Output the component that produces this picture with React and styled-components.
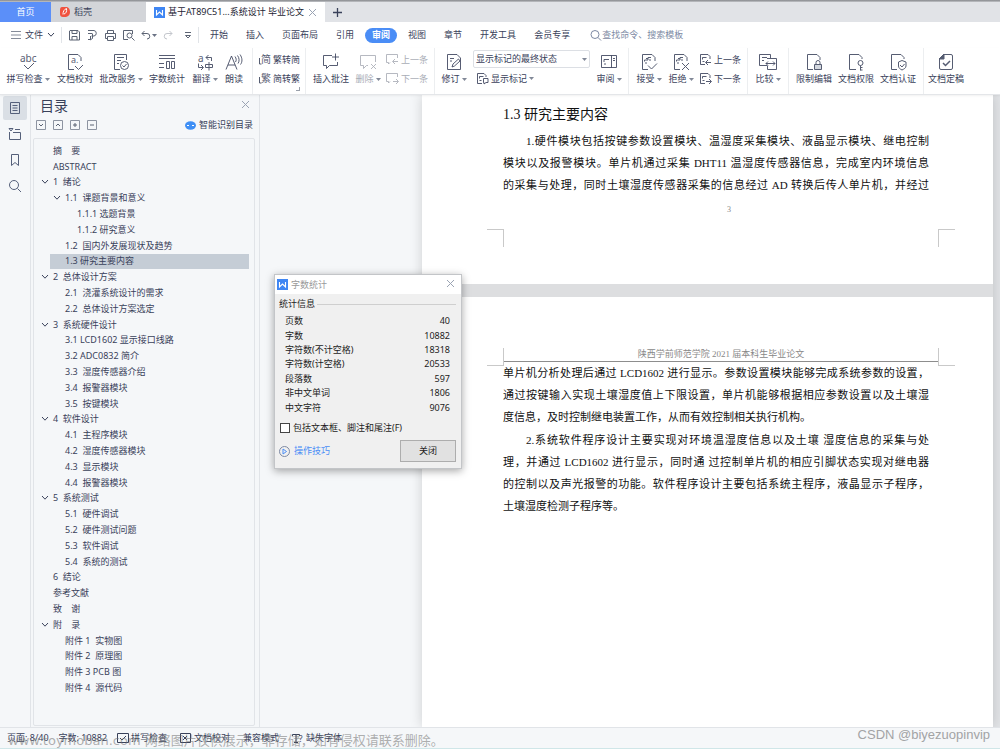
import React, { useState } from "react";
import styled, { createGlobalStyle, ThemeProvider } from "styled-components";

const theme = {
    ui: '"Noto Sans", "Noto Sans CJK SC", sans-serif',
    doc: '"Liberation Serif", "Noto Sans CJK SC", serif',
    ink: '#39415a',
    muted: '#a9adb6',
    accent: '#4a8df6',
    line: '#e1e4e8',
    pane: '#f5f7f9',
};

const GlobalStyle = createGlobalStyle`
    * {
        box-sizing: border-box;
    }
    body {
        margin: 0;
        background: #fff;
    }
    button, input, select {
        margin: 0;
        padding: 0;
        border: 0;
        background: none;
        color: inherit;
        font: inherit;
    }
    svg {
        flex: none;
        overflow: visible;
    }
`

const Window = styled.div`
    position: relative;
    display: flex;
    flex-direction: column;
    min-height: 100vh;
    overflow: hidden;
    color: ${props => props.theme.ink};
    font: 9px/14px ${props => props.theme.ui};
    white-space: nowrap;
`

const TopEdge = styled.div`
    height: 2px;
    background: linear-gradient(#85878b, #c3c5c9);
`

const TabBar = styled.div`
    display: flex;
    height: 20px;
    background: #e1e3e7;
`

const Tab = styled.button`
    display: flex;
    align-items: center;
    gap: 3px;
    width: ${props => props.$width};
    padding: 0 8px;
    background: ${props => props.$bg};
    color: ${props => props.$color};
    justify-content: ${props => props.$center ? 'center' : 'flex-start'};
`

const TabTitle = styled.span`
    flex: 1;
    text-align: left;
`

const MenuBar = styled.div`
    display: flex;
    align-items: center;
    height: 26px;
    padding-left: 10px;
`

const MenuDivider = styled.span`
    width: 1px;
    height: 16px;
    background: ${props => props.theme.line};
`

const FileButton = styled.button`
    display: flex;
    align-items: center;
    gap: 4px;
    width: 51px;
`

const QuickTools = styled.div`
    display: flex;
    align-items: center;
    gap: 5px;
    width: 136px;
    padding-left: 6px;
`

const ToolButton = styled.button`
    display: flex;
    align-items: center;
    color: ${props => props.$off ? '#c3c6cc' : '#5b6373'};
`

const MenuItems = styled.nav`
    display: flex;
    padding-left: 2px;
`

const MenuItem = styled.button`
    padding: 0 ${props => props.$active ? '7px' : '9px'};
    margin: 0 ${props => props.$active ? '2px' : '0'};
    height: 15px;
    border-radius: 8px;
    background: ${props => props.$active ? props.theme.accent : 'none'};
    color: ${props => props.$active ? '#fff' : 'inherit'};
    font-weight: ${props => props.$active ? 700 : 400};
`

const Search = styled.label`
    display: flex;
    align-items: center;
    margin-left: 11px;
    color: #7d89a3;
    input {
        width: 100px;
        outline: none;
    }
    input::placeholder {
        color: #7d89a3;
        opacity: 1;
    }
`

const Ribbon = styled.div`
    display: flex;
    height: 47px;
    border-bottom: 1px solid #e4e6e9;
    position: relative;
    z-index: 1;
    background: #fff;
    box-shadow: 0 1px 2px rgba(0, 0, 0, 0.06);
    svg {
        opacity: 0.85;
    }
`

const Group = styled.div`
    position: relative;
    display: flex;
    padding: 0 4px;
    border-right: 1px solid ${props => props.$last ? 'transparent' : '#eceef0'};
`

const BigButton = styled.button`
    display: flex;
    flex-direction: column;
    align-items: center;
    justify-content: flex-start;
    gap: 1px;
    width: ${props => props.$width};
    padding-top: 5px;
    color: ${props => props.$off ? props.theme.muted : 'inherit'};
`

const Label = styled.span`
    display: flex;
    align-items: center;
    gap: 2px;
`

const Stack = styled.div`
    display: flex;
    flex-direction: column;
    padding: 2px ${props => props.$pad || '4px'} 0;
`

const SmallButton = styled.button`
    display: flex;
    align-items: center;
    gap: 2px;
    height: 19px;
    padding-left: ${props => props.$inset ? '3px' : '0'};
    color: ${props => props.$off ? props.theme.muted : 'inherit'};
`

const Corner = styled.span`
    position: absolute;
    right: 5px;
    bottom: 3px;
    width: 4px;
    height: 4px;
    border-right: 1px solid #9aa0ab;
    border-bottom: 1px solid #9aa0ab;
`

const SelectBox = styled.div`
    position: relative;
    display: flex;
    height: 18px;
    width: 117px;
    margin-bottom: 1px;
    select {
        flex: 1;
        appearance: none;
        padding-left: 2px;
        border: 1px solid #dcdfe4;
        border-radius: 2px;
    }
    svg {
        position: absolute;
        right: 3px;
        top: 8px;
        pointer-events: none;
    }
`

const Main = styled.main`
    display: flex;
    flex: 1;
    background: ${props => props.theme.pane};
`

const SideRail = styled.div`
    display: flex;
    flex-direction: column;
    align-items: center;
    gap: 2px;
    width: 31px;
    padding-top: 1px;
    border-right: 1px solid ${props => props.theme.line};
`

const RailButton = styled.button`
    display: flex;
    align-items: center;
    justify-content: center;
    width: 24px;
    height: 24px;
    border-radius: 2px;
    background: ${props => props.$active ? '#dadfe5' : 'none'};
    color: #55607a;
`

const Outline = styled.aside`
    display: flex;
    flex-direction: column;
    width: 229px;
    padding: 0 4px 1px 2px;
    border-right: 1px solid ${props => props.theme.line};
`

const OutlineHead = styled.div`
    display: flex;
    align-items: center;
    justify-content: space-between;
    height: 22px;
    padding: 0 5px 0 7px;
    h2 {
        margin: 0;
        font-size: 14px;
        line-height: 20px;
        font-weight: 400;
    }
`

const OutlineTools = styled.div`
    display: flex;
    align-items: center;
    gap: 6px;
    height: 16px;
    margin-bottom: 5px;
    padding: 0 2px 0 3px;
`

const SmartButton = styled.button`
    display: flex;
    align-items: center;
    gap: 3px;
    margin-left: auto;
`

const Tree = styled.ul`
    display: flex;
    flex-direction: column;
    flex: 1;
    margin: 0;
    padding: 4px 5px 29px 7px;
    border: 1px solid ${props => props.theme.line};
    border-radius: 2px;
    list-style: none;
`

const TreeRow = styled.li`
    display: flex;
    align-items: center;
    flex: 1;
    padding-left: ${props => props.$level * 12}px;
    background: ${props => props.$selected ? 'linear-gradient(to right, transparent 9px, #c5cdd6 9px)' : 'none'};
    white-space: pre;
`

const TreeToggle = styled.button`
    display: flex;
    align-items: center;
    width: 12px;
    height: 12px;
`

const Canvas = styled.section`
    display: flex;
    flex: 1;
    padding: 0 7px 0 162px;
    overflow: hidden;
    background: linear-gradient(to right, ${props => props.theme.pane} 50%, #e2e4e7 50%);
`

const Sheets = styled.div`
    display: flex;
    flex-direction: column;
    gap: 13px;
    flex: 1;
    background: #dddee0;
    box-shadow: 0 0 12px rgba(0, 0, 0, 0.16);
    color: #111;
    font: 11px/22px ${props => props.theme.doc};
`

const Sheet = styled.article`
    flex: ${props => props.$grow ? 1 : 'none'};
    padding: ${props => props.$grow ? '51px' : '9px'} 54px 37px 81px;
    background: #fff;
    h3 {
        margin: 0 0 4px;
        font-size: 14px;
        font-weight: 400;
    }
`

const Paragraph = styled.p`
    margin: 0 10px 1px 0;
    white-space: normal;
`

const Line = styled.span`
    display: block;
    text-indent: ${props => props.$first ? '23px' : '0'};
    text-align: justify;
    text-align-last: ${props => props.$end ? 'left' : 'justify'};
`

const PageNumber = styled.div`
    margin: 7px 0 12px;
    padding-left: 16px;
    color: #888;
    font-size: 8px;
    line-height: 14px;
    text-align: center;
`

const CropMarks = styled.div`
    display: grid;
    grid-template-columns: 17px 1fr 17px;
    align-items: start;
    margin: 0 -16px ${props => props.$top ? '-4px' : '0'};
`

const Mark = styled.span`
    height: 18px;
    border: 0 solid #c9c9c9;
    border-bottom-width: ${props => props.$top ? '1px' : '0'};
    border-top-width: ${props => props.$top ? '0' : '1px'};
    border-right-width: ${props => props.$right ? '0' : '1px'};
    border-left-width: ${props => props.$right ? '1px' : '0'};
`

const RunningHead = styled.div`
    height: 14px;
    border-bottom: 1px solid #8d8d8d;
    color: #888;
    font-size: 9px;
    line-height: 12px;
    text-align: center;
`

const StatusBar = styled.footer`
    display: flex;
    align-items: center;
    gap: 10px;
    height: 22px;
    padding: 0 7px;
    border-top: 1px solid ${props => props.theme.line};
    border-bottom: 1px solid #cfe6e8;
    background: ${props => props.theme.pane};
`

const StatusItem = styled.button`
    display: flex;
    align-items: center;
    gap: 2px;
    margin-right: ${props => props.$wide ? '3px' : '0'};
`

const Dialog = styled.div`
    position: absolute;
    left: 274px;
    top: 274px;
    z-index: 2;
    width: 188px;
    border: 1px solid #c3c5c8;
    background: #f0f0f0;
    box-shadow: 0 2px 8px rgba(0, 0, 0, 0.35);
    color: #1c1c1c;
`

const DialogTitle = styled.div`
    display: flex;
    align-items: center;
    gap: 3px;
    height: 19px;
    padding: 0 6px 0 2px;
    background: #fff;
    color: #999;
`

const DialogBody = styled.div`
    padding: 3px 5px 6px 4px;
`

const Legend = styled.div`
    display: flex;
    align-items: center;
    gap: 2px;
    &::after {
        content: "";
        flex: 1;
        height: 1px;
        background: #cfcfcf;
    }
`

const Stats = styled.table`
    width: 100%;
    height: 101px;
    margin: 3px 0 6px;
    padding: 0 6px;
    border-collapse: separate;
    border-spacing: 0;
    th, td {
        padding: 0;
        font-weight: 400;
        line-height: 14px;
        text-align: left;
    }
    td {
        text-align: right;
    }
`

const CheckLine = styled.label`
    display: flex;
    align-items: center;
    gap: 3px;
    padding-left: 1px;
    input {
        appearance: none;
        width: 10px;
        height: 10px;
        border: 1px solid #444;
        background: #fff;
    }
`

const DialogFoot = styled.div`
    display: flex;
    align-items: center;
    justify-content: space-between;
    margin-top: 5px;
    a {
        display: flex;
        align-items: center;
        gap: 4px;
        color: ${props => props.theme.accent};
        text-decoration: none;
    }
    button {
        width: 56px;
        height: 22px;
        border: 1px solid #adadad;
        background: #e1e1e1;
    }
`

const SiteMark = styled.div`
    position: absolute;
    left: 8px;
    bottom: 0;
    z-index: 3;
    color: rgba(110, 110, 110, 0.55);
    font: 13px/16px "DejaVu Sans", "Noto Sans CJK SC", sans-serif;
    pointer-events: none;
`

const AuthorMark = styled.div`
    position: absolute;
    right: 10px;
    bottom: 6px;
    z-index: 3;
    color: #a2a3a5;
    font: 13px/16px "Liberation Sans", sans-serif;
    pointer-events: none;
`

const Svg = ({ w = 18, h = 18, children }) => (
    <svg width={w} height={h} viewBox={`0 0 ${w} ${h}`} fill="none" stroke="currentColor" strokeWidth="1" aria-hidden="true">
        {children}
    </svg>
);

const Glyph = ({ x, y, size, children }) => (
    <text x={x} y={y} fontSize={size} fill="currentColor" stroke="none">{children}</text>
);

const Caret = () => <Svg w={5} h={3}><path d="M0 0h5L2.5 3z" fill="#6b7385" stroke="none" /></Svg>;
const Chevron = () => <Svg w={8} h={6}><path d="M1 1l3 3.200L7 1" /></Svg>;
const Close = ({ size = 9 }) => <Svg w={size} h={size}><path d={`M1 1L${size - 1} ${size - 1}M${size - 1} 1L1 ${size - 1}`} stroke="#9aa3b3" /></Svg>;

const WriterLogo = () => (
    <Svg w={11} h={11}>
        <path d="M0 0h11v11H0z" fill="#3f86f3" stroke="none" />
        <path d="M2.500 3v5L5.500 5l3 3V3" stroke="#fff" strokeWidth="1.100" />
    </Svg>
);

const docEdge = "M8 16.500H2.500V1.500H12L15 4.500V8";
const flag = "M4.500 8.500V7H8V4.500H11M6 5.500h2M5 10h2M9 7h2";

const icons = {
    spell: <Svg><Glyph x={1} y={9} size={10}>abc</Glyph><path d="M5 12l4 4 6-6" /></Svg>,
    proof: <Svg><path d={docEdge} /><Glyph x={5} y={10} size={9}>a.</Glyph><path d="M9 13l3.500 3.500L17 12" /></Svg>,
    service: <Svg><path d="M8 16.500H2.500V1.500h12V7M5 4.500h7M5 7.500h4M5 10.500h2" /><circle cx="12.500" cy="12.500" r="4" /><path d="M10.500 12.500l1.500 1.500 2.500-3" /></Svg>,
    count: <Svg><path d="M1 2.500h16M1 5.500h16M1 10.500h5M1 14.500h5M8.500 8.500h3v7h-3zM13.500 8.500h3v7h-3z" /></Svg>,
    translate: <Svg><Glyph x={2} y={9} size={10}>a</Glyph><path d="M10 4.500h5.500V8M12.500 2L10 4.500 12.500 7M2.500 10.500v4H7M5 12l2.500 2.500L5 17M9.500 11.500h7v3h-7zM13 9v8.500" /></Svg>,
    read: <Svg><path d="M1 16.500L6.500 3l5.500 13.500M3 12h7M10 3.500c1.500 2 1.500 4 .5 5.500M12.500 2.500c2 2.500 2 6 .5 8M15 1.500c2.500 3.500 2.500 7.500.5 10" /></Svg>,
    insert: <Svg><path d="M10 2.500H1.500v10h3v3l3-3h8V9M13.500.5v7M10 4h7" /></Svg>,
    remove: <Svg><path d="M9 12.500H7.500l-3 3v-3h-3v-10h15V9M12 11l5 5M17 11l-5 5" /></Svg>,
    revise: <Svg><path d="M9 1.500H2.500v15h13V5L12 1.500H9M5 5.500h4M5 8h2M7 14l1-3 5.500-5L15 8l-5.500 5z" /></Svg>,
    review: <Svg><path d="M1.500 2.500h15v12h-15zM11.500 2.500v12M4 9V6.500h5M4 11h2M13 5.500h2M13 7.500h2" /></Svg>,
    accept: <Svg><path d={docEdge} /><path d={flag} /><path d="M8 12.500l3.500 3.500L17 10.500" /></Svg>,
    reject: <Svg><path d={docEdge} /><path d={flag} /><path d="M10 10l7 7M17 10l-7 7" /></Svg>,
    compare: <Svg><path d="M8 12.500H.500V1.500h11V5M3 4.500h5M3 7.500h2M8 5.500h9.500v11H8.500v-4M7 10.500h9M9 8.500l-2 2 2 2M14 8.500l2 2-2 2" /></Svg>,
    restrict: <Svg><path d="M8 16.500H2.500V1.500H12L15 4.500V7" /><path d="M9.500 11.500h7v5h-7z" fill="#cdd2da" /><path d="M11 11V9.500a2 2 0 014 0V11" /></Svg>,
    rights: <Svg><path d="M9 16.500H2.500V1.500H12L15 4.500V6" /><circle cx="13.500" cy="10" r="2.500" /><path d="M13.500 12.500v5M13.500 14.500h2M13.500 17h2" /></Svg>,
    certify: <Svg><path d="M8 16.500H2.500V1.500H12L15 4.500V6" /><path d="M9.500 9l3.500-1.500L17 9v4c0 2-2 3-4 4-2-1-3.500-2-3.500-4zM11 12l2 2 2.500-3" /></Svg>,
    final: <Svg><path d="M7 1.500h7q1.500 0 1.500 1.500v12q0 1.500-1.500 1.500H4q-1.500 0-1.500-1.500V6z" /><path d="M7 1v5H2z" fill="currentColor" /><path d="M6 10l2.500 2.500L13 8" strokeWidth="1.500" /></Svg>,
    simple: <Svg w={13} h={13}><Glyph x={3} y={10} size={10}>简</Glyph><path d="M1.500 5v6h2" /></Svg>,
    trad: <Svg w={13} h={13}><Glyph x={3} y={10} size={10}>繁</Glyph><path d="M1.500 5v6h2" /></Svg>,
    notePrev: <Svg w={13} h={13}><path d="M4 9.500L2.500 11V9.500H.5v-8h11V5M12 8.500H7M9 6L6.500 8.500 9 11" /></Svg>,
    noteNext: <Svg w={13} h={13}><path d="M4 9.500L2.500 11V9.500H.5v-8h11V5M7 9.500h5M10 7l2.500 2.500L10 12" /></Svg>,
    changePrev: <Svg w={13} h={13}><path d="M6 11.500H1.500V1.500H9l2 2V6M3.500 6.500V4.500h4M3.500 8.500h2M12 9.500H7M9 7L6.500 9.500 9 12" /></Svg>,
    changeNext: <Svg w={13} h={13}><path d="M6 11.500H1.500V1.500H9l2 2V6M3.500 6.500V4.500h4M3.500 8.500h2M7 9.500h5M10 7l2.500 2.500L10 12" /></Svg>,
    marks: <Svg w={13} h={13}><path d="M6 11.500H1.500V1.500H8l2 2V5M3.500 6.500V4.500h4M3.500 8.500h2M7.500 6.500h4.500v4h-2L8 12v-1.500h-.5z" /></Svg>,
};

const Big = ({ icon, label, width, caret, off }) => (
    <BigButton $width={width} $off={off}>
        {icons[icon]}
        <Label>{label}{caret && <Caret />}</Label>
    </BigButton>
);

const Small = ({ icon, label, off, caret, inset }) => (
    <SmallButton $off={off} $inset={inset}>
        {icons[icon]}
        <Label>{label}{caret && <Caret />}</Label>
    </SmallButton>
);

const quickTools = [
    { name: '保存', icon: <Svg w={13} h={12}><path d="M2 1.500h8l1.500 1.500v8h-10V2zM4 1.500v3h5v-3M4 11V7.500h5V11" /></Svg> },
    { name: '输出', icon: <Svg w={13} h={12}><path d="M2 1.500h6a2.800 2.800 0 010 5.500H5.500M6.500 4.500v5L4 11M2 10.500h2.500V7M2 4.500h4" /></Svg> },
    { name: '打印', icon: <Svg w={13} h={12}><path d="M3.500 4V1.500h6V4M3 9.500H1.500v-5h10v5H10M3.500 7.500h6v4h-6z" /></Svg> },
    { name: '打印预览', icon: <Svg w={13} h={12}><path d="M6 10.500H1.500v-9h9V5" /><circle cx="7.500" cy="6.500" r="2.500" /><path d="M9.500 8.500l3 3" /></Svg> },
    { name: '撤销', icon: <><Svg w={12} h={12}><path d="M4.500 2L2 4.500 4.500 7M2 4.500h5a2.700 2.700 0 010 5.500" /></Svg><Caret /></> },
    { name: '恢复', off: true, icon: <Svg w={12} h={12}><path d="M7.500 2L10 4.500 7.500 7M10 4.500H5A2.700 2.700 0 005 10" /></Svg> },
    { name: '更多', icon: <Svg w={14} h={12}><path d="M6 3.500h6M6.500 6.500h5L9 9z" /></Svg> },
];

const menus = ['开始', '插入', '页面布局', '引用', '审阅', '视图', '章节', '开发工具', '会员专享'];

const railIcons = [
    { name: '目录', icon: <Svg w={12} h={14}><path d="M1.500 1.500h9v11h-9zM3.500 4.500h5M3.500 7h5M3.500 9.500h5" /></Svg> },
    { name: '章节', icon: <Svg w={14} h={14}><path d="M1.500 5v7.500h11v-7H5M1 1.500h4L3 4zM7 2.500h5" /></Svg> },
    { name: '书签', icon: <Svg w={12} h={14}><path d="M2.500 1.500h7v11L6 9.500l-3.500 3z" /></Svg> },
    { name: '查找', icon: <Svg w={14} h={14}><circle cx="6" cy="6" r="4.500" /><path d="M9.500 9.500L13 13" /></Svg> },
];

const outlineTools = [
    ['展开', 'M3 4l2 2 2-2'],
    ['收起', 'M3 6l2-2 2 2'],
    ['增加', 'M3 5h4M5 3v4'],
    ['减少', 'M3 5h4'],
];

const chapters = [
    [0, '摘    要'],
    [0, 'ABSTRACT'],
    [0, '1  绪论', true],
    [1, '1.1  课题背景和意义', true],
    [2, '1.1.1 选题背景'],
    [2, '1.1.2 研究意义'],
    [1, '1.2  国内外发展现状及趋势'],
    [1, '1.3 研究主要内容'],
    [0, '2  总体设计方案', true],
    [1, '2.1  浇灌系统设计的需求'],
    [1, '2.2  总体设计方案选定'],
    [0, '3  系统硬件设计', true],
    [1, '3.1 LCD1602 显示接口线路'],
    [1, '3.2 ADC0832 简介'],
    [1, '3.3  湿度传感器介绍'],
    [1, '3.4  报警器模块'],
    [1, '3.5  按键模块'],
    [0, '4  软件设计', true],
    [1, '4.1  主程序模块'],
    [1, '4.2  湿度传感器模块'],
    [1, '4.3  显示模块'],
    [1, '4.4  报警器模块'],
    [0, '5  系统测试', true],
    [1, '5.1  硬件调试'],
    [1, '5.2  硬件测试问题'],
    [1, '5.3  软件调试'],
    [1, '5.4  系统的测试'],
    [0, '6  结论'],
    [0, '参考文献'],
    [0, '致    谢'],
    [0, '附    录', true],
    [1, '附件 1  实物图'],
    [1, '附件 2  原理图'],
    [1, '附件 3 PCB 图'],
    [1, '附件 4  源代码'],
];

const stats = [
    ['页数', 40],
    ['字数', 10882],
    ['字符数(不计空格)', 18318],
    ['字符数(计空格)', 20533],
    ['段落数', 597],
    ['非中文单词', 1806],
    ['中文字符', 9076],
];

const hardware = [
    '1.硬件模块包括按键参数设置模块、温湿度采集模块、液晶显示模块、继电控制',
    '模块以及报警模块。单片机通过采集 DHT11 温湿度传感器信息，完成室内环境信息',
    '的采集与处理，同时土壤湿度传感器采集的信息经过 AD 转换后传人单片机，并经过',
];

const hardwareNext = [
    '单片机分析处理后通过 LCD1602 进行显示。参数设置模块能够完成系统参数的设置，',
    '通过按键输入实现土壤湿度值上下限设置，单片机能够根据相应参数设置以及土壤湿',
    '度信息，及时控制继电装置工作，从而有效控制相关执行机构。',
];

const software = [
    '2.系统软件程序设计主要实现对环境温湿度信息以及土壤 湿度信息的采集与处',
    '理，并通过 LCD1602 进行显示，同时通 过控制单片机的相应引脚状态实现对继电器',
    '的控制以及声光报警的功能。软件程序设计主要包括系统主程序，液晶显示子程序，',
    '土壤湿度检测子程序等。',
];

const Text = ({ lines, indent, ends }) => (
    <Paragraph>
        {lines.map((line, i) => (
            <Line key={line} $first={indent && i === 0} $end={ends && i === lines.length - 1}>{line}</Line>
        ))}
    </Paragraph>
);

const App = () => {
    const [menu, setMenu] = useState('审阅');
    const [selected, setSelected] = useState('1.3 研究主要内容');
    const [dialogOpen, setDialogOpen] = useState(true);

    return (
        <ThemeProvider theme={theme}>
            <GlobalStyle />
            <Window>
                <TopEdge />
                <TabBar>
                    <Tab $width="51px" $bg="#5b8ff9" $color="#fff" $center>首页</Tab>
                    <Tab $width="95px" $bg="#d3d5d9">
                        <Svg w={12} h={12}>
                            <path d="M3 1h5q3 1 3 5t-4 5H4q-3 0-3-3V4q0-3 2-3z" fill="#f0523f" stroke="none" />
                            <path d="M4 8.500c0-3 1-5 3.500-6 .5 3-.5 5-2.500 5.500" stroke="#fff" />
                        </Svg>
                        稻壳
                    </Tab>
                    <Tab $width="179px" $bg="#fff" $color="#1d2433">
                        <WriterLogo />
                        <TabTitle>基于AT89C51...系统设计 毕业论文</TabTitle>
                        <Close />
                    </Tab>
                    <Tab $width="26px" aria-label="新建">
                        <Svg w={9} h={9}><path d="M4.500 0v9M0 4.500h9" strokeWidth="1.300" /></Svg>
                    </Tab>
                </TabBar>

                <MenuBar>
                    <FileButton>
                        <Svg w={11} h={10}><path d="M1 1.500h10M1 5h10M1 8.500h10" stroke="#858c9a" /></Svg>
                        文件
                        <Chevron />
                    </FileButton>
                    <MenuDivider />
                    <QuickTools>
                        {quickTools.map(tool => (
                            <ToolButton key={tool.name} aria-label={tool.name} $off={tool.off}>{tool.icon}</ToolButton>
                        ))}
                    </QuickTools>
                    <MenuDivider />
                    <MenuItems>
                        {menus.map(item => (
                            <MenuItem key={item} $active={item === menu} onClick={() => setMenu(item)}>{item}</MenuItem>
                        ))}
                    </MenuItems>
                    <Search>
                        <Svg w={12} h={12}><circle cx="5" cy="5.500" r="4" /><path d="M8 8.500l3 3" /></Svg>
                        <input type="text" placeholder="查找命令、搜索模板" aria-label="查找命令、搜索模板" />
                    </Search>
                </MenuBar>

                <Ribbon>
                    <Group>
                        <Big icon="spell" label="拼写检查" width="48px" caret />
                        <Big icon="proof" label="文档校对" width="46px" />
                        <Big icon="service" label="批改服务" width="46px" caret />
                        <Big icon="count" label="字数统计" width="46px" />
                        <Big icon="translate" label="翻译" width="30px" caret />
                        <Big icon="read" label="朗读" width="28px" />
                    </Group>
                    <Group>
                        <Stack $pad="1px">
                            <Small icon="simple" label="繁转简" />
                            <Small icon="trad" label="简转繁" />
                        </Stack>
                        <Corner />
                    </Group>
                    <Group>
                        <Big icon="insert" label="插入批注" width="42px" />
                        <Big icon="remove" label="删除" width="32px" caret off />
                        <Stack $pad="2px">
                            <Small icon="notePrev" label="上一条" off />
                            <Small icon="noteNext" label="下一条" off />
                        </Stack>
                    </Group>
                    <Group>
                        <Big icon="revise" label="修订" width="30px" caret />
                        <Stack>
                            <SelectBox>
                                <select aria-label="显示状态" defaultValue="final">
                                    <option value="final">显示标记的最终状态</option>
                                    <option value="clean">最终状态</option>
                                </select>
                                <Caret />
                            </SelectBox>
                            <Small icon="marks" label="显示标记" caret inset />
                        </Stack>
                        <Big icon="review" label="审阅" width="30px" caret />
                    </Group>
                    <Group>
                        <Big icon="accept" label="接受" width="32px" caret />
                        <Big icon="reject" label="拒绝" width="32px" caret />
                        <Stack $pad="2px">
                            <Small icon="changePrev" label="上一条" />
                            <Small icon="changeNext" label="下一条" />
                        </Stack>
                    </Group>
                    <Group>
                        <Big icon="compare" label="比较" width="32px" caret />
                    </Group>
                    <Group>
                        <Big icon="restrict" label="限制编辑" width="42px" />
                        <Big icon="rights" label="文档权限" width="42px" />
                        <Big icon="certify" label="文档认证" width="42px" />
                    </Group>
                    <Group $last>
                        <Big icon="final" label="文档定稿" width="36px" />
                    </Group>
                </Ribbon>

                <Main>
                    <SideRail>
                        {railIcons.map((item, i) => (
                            <RailButton key={item.name} aria-label={item.name} $active={i === 0}>{item.icon}</RailButton>
                        ))}
                    </SideRail>
                    <Outline>
                        <OutlineHead>
                            <h2>目录</h2>
                            <button aria-label="关闭目录"><Close /></button>
                        </OutlineHead>
                        <OutlineTools>
                            {outlineTools.map(([name, path]) => (
                                <ToolButton key={name} aria-label={name}>
                                    <Svg w={11} h={11}><path d="M.5.5h9v9h-9z" stroke="#8d94a1" /><path d={path} /></Svg>
                                </ToolButton>
                            ))}
                            <SmartButton>
                                <Svg w={11} h={9}>
                                    <ellipse cx="5.500" cy="4.500" rx="5.500" ry="4.200" fill="#3f8ff5" stroke="none" />
                                    <path d="M2 4.500h2M7 4.500h2" stroke="#fff" />
                                </Svg>
                                智能识别目录
                            </SmartButton>
                        </OutlineTools>
                        <Tree>
                            {chapters.map(([level, title, open]) => (
                                <TreeRow key={title} $level={level} $selected={title === selected} onClick={() => setSelected(title)}>
                                    {open ? <TreeToggle aria-label="折叠"><Chevron /></TreeToggle> : <TreeToggle as="span" />}
                                    {title}
                                </TreeRow>
                            ))}
                        </Tree>
                    </Outline>
                    <Canvas>
                        <Sheets>
                            <Sheet>
                                <h3>1.3 研究主要内容</h3>
                                <Text lines={hardware} indent />
                                <PageNumber>3</PageNumber>
                                <CropMarks>
                                    <Mark />
                                    <span />
                                    <Mark $right />
                                </CropMarks>
                            </Sheet>
                            <Sheet $grow>
                                <CropMarks $top>
                                    <Mark $top />
                                    <RunningHead>陕西学前师范学院 2021 届本科生毕业论文</RunningHead>
                                    <Mark $top $right />
                                </CropMarks>
                                <Text lines={hardwareNext} ends />
                                <Text lines={software} indent ends />
                            </Sheet>
                        </Sheets>
                    </Canvas>
                </Main>

                <StatusBar>
                    <StatusItem>页面: 8/40</StatusItem>
                    <StatusItem>字数: 10882</StatusItem>
                    <StatusItem $wide>
                        <Svg w={12} h={11}><path d="M.5.5h11v9H.5zM3 5l2 2 4-4" /></Svg>
                        拼写检查
                    </StatusItem>
                    <StatusItem $wide>
                        <Svg w={12} h={11}><path d="M.5.5h10v9H.5zM3 3l4 4M7 3L3 7" /></Svg>
                        文档校对
                    </StatusItem>
                    <StatusItem $wide>兼容模式</StatusItem>
                    <StatusItem>
                        <Svg w={12} h={11}><path d="M.5 3V1.500h7V3M4 1.500v8M2 9.500h4" /><Glyph x={7} y={9} size={8}>?</Glyph></Svg>
                        缺失字体
                    </StatusItem>
                </StatusBar>

                {dialogOpen && (
                    <Dialog role="dialog" aria-label="字数统计">
                        <DialogTitle>
                            <WriterLogo />
                            <TabTitle>字数统计</TabTitle>
                            <button aria-label="关闭窗口" onClick={() => setDialogOpen(false)}><Close /></button>
                        </DialogTitle>
                        <DialogBody>
                            <Legend>统计信息</Legend>
                            <Stats>
                                <tbody>
                                    {stats.map(([name, value]) => (
                                        <tr key={name}>
                                            <th scope="row">{name}</th>
                                            <td>{value}</td>
                                        </tr>
                                    ))}
                                </tbody>
                            </Stats>
                            <CheckLine>
                                <input type="checkbox" />
                                包括文本框、脚注和尾注(F)
                            </CheckLine>
                            <DialogFoot>
                                <a href="#tips">
                                    <Svg w={11} h={11}><circle cx="5.500" cy="5.500" r="5" stroke="#7d89a3" /><path d="M4 3l3.500 2.500L4 8z" /></Svg>
                                    操作技巧
                                </a>
                                <button onClick={() => setDialogOpen(false)}>关闭</button>
                            </DialogFoot>
                        </DialogBody>
                    </Dialog>
                )}

                <SiteMark>www.toymoban.com 网络图片仅供展示，非存储，如有侵权请联系删除。</SiteMark>
                <AuthorMark>CSDN @biyezuopinvip</AuthorMark>
            </Window>
        </ThemeProvider>
    );
}

export default App;
